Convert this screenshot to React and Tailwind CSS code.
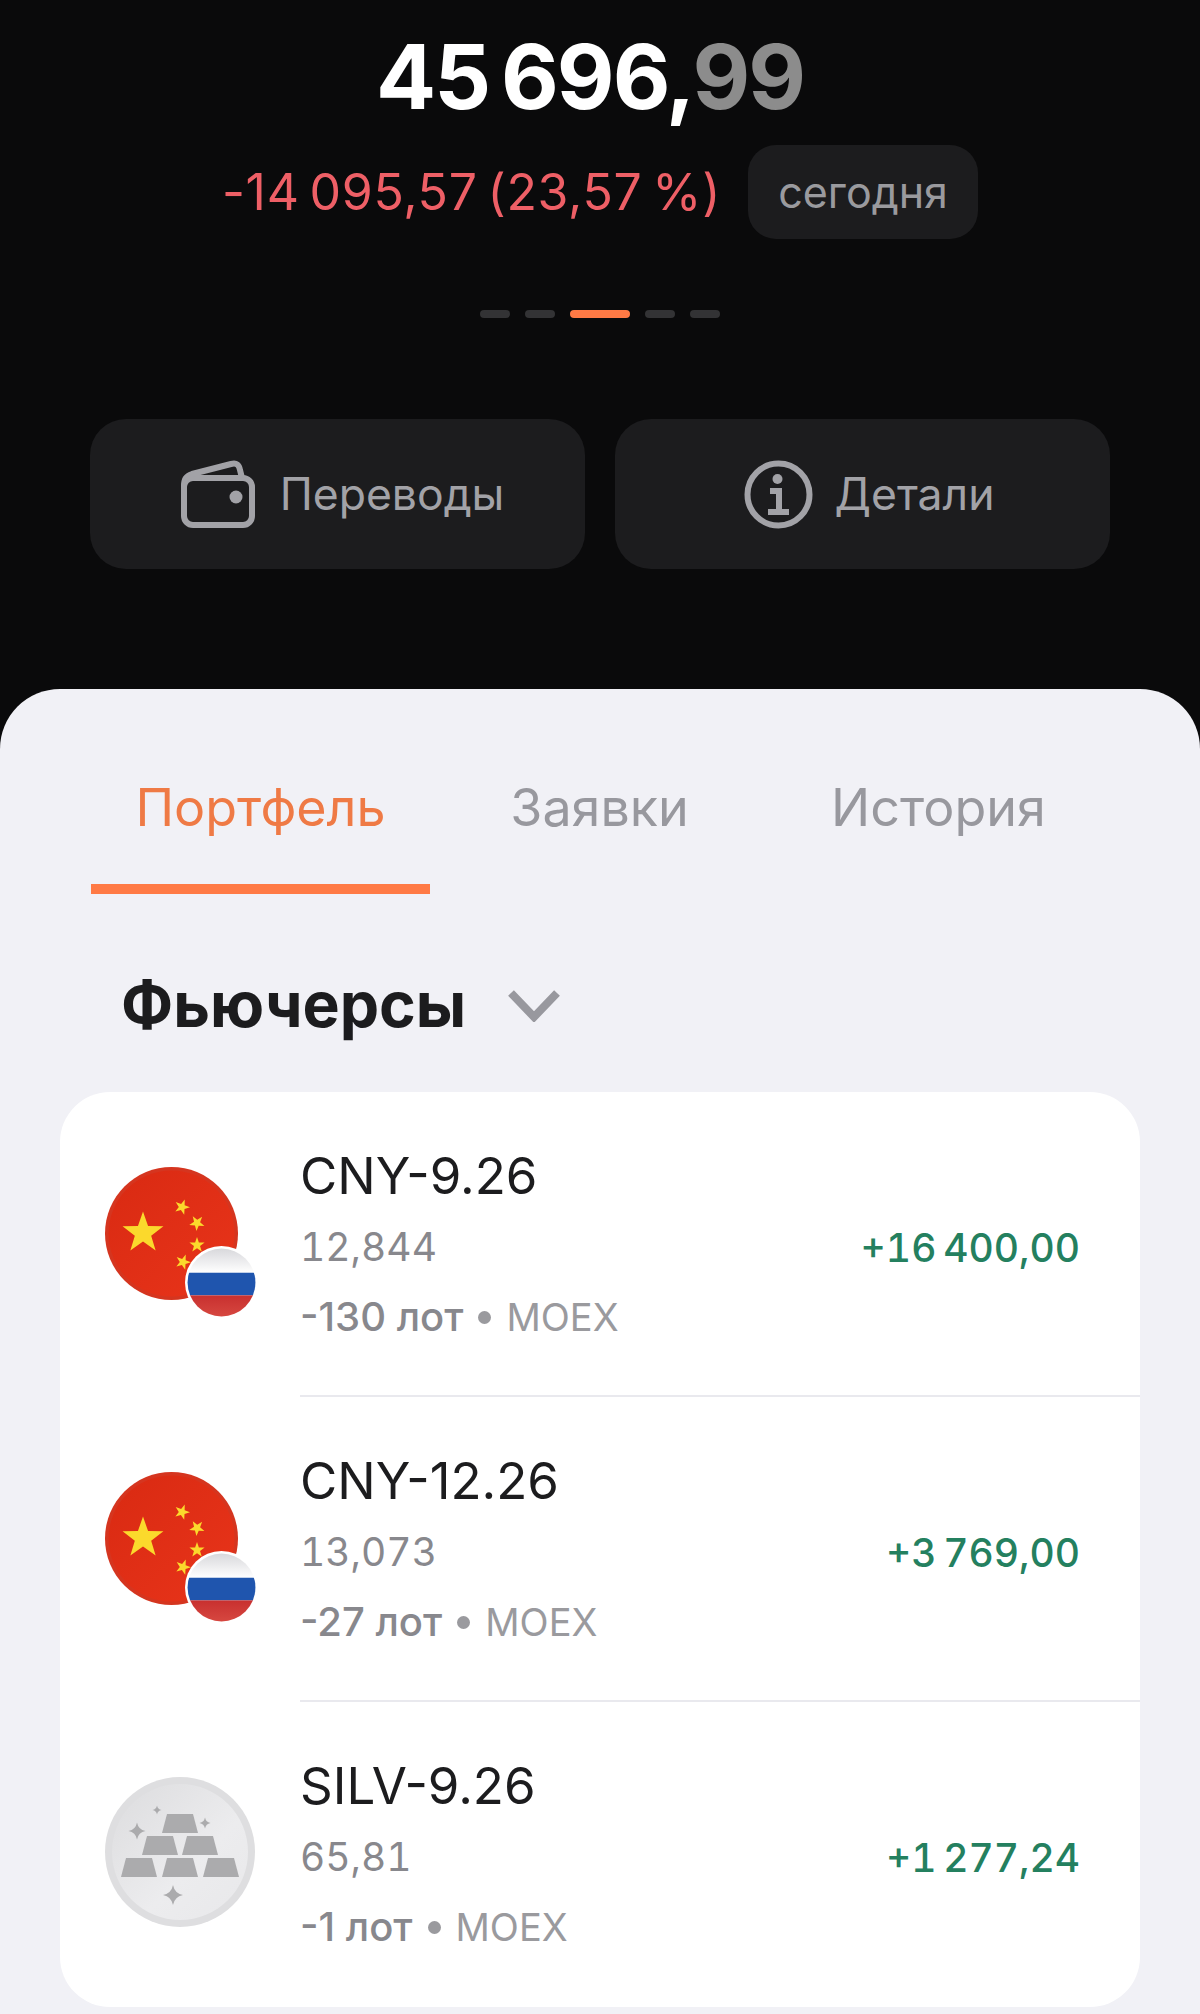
const positions = [
  { id: 1, icon: 'cny', name: 'CNY-9.26', price: '12,844', lots: '-130 лот', pnl: '+16\u2009400,00' },
  { id: 2, icon: 'cny', name: 'CNY-12.26', price: '13,073', lots: '-27 лот', pnl: '+3\u2009769,00' },
  { id: 3, icon: 'silver', name: 'SILV-9.26', price: '65,81', lots: '-1 лот', pnl: '+1\u2009277,24' },
];

const starPoints = '0,-10 2.35,-3.24 9.51,-3.09 3.8,1.24 5.88,8.09 0,4 -5.88,8.09 -3.8,1.24 -9.51,-3.09 -2.35,-3.24';

function ChinaFlag() {
  return (
    <svg viewBox="0 0 133 133" className="w-[133px] h-[133px] block">
      <defs>
        <linearGradient id="cnRed" x1="0" y1="0" x2="1" y2="1">
          <stop offset="0" stopColor="#d92a12" />
          <stop offset="1" stopColor="#e8341a" />
        </linearGradient>
      </defs>
      <circle cx="66.5" cy="66.5" r="66.5" fill="#d5351f" />
      <circle cx="66.5" cy="66.5" r="63" fill="url(#cnRed)" />
      <g fill="#fbd92c">
        <polygon points={starPoints} transform="translate(38 66) scale(2.15)" />
        <polygon points={starPoints} transform="translate(77 40) rotate(20) scale(0.8)" />
        <polygon points={starPoints} transform="translate(92 56) rotate(40) scale(0.8)" />
        <polygon points={starPoints} transform="translate(92 78) rotate(0) scale(0.8)" />
        <polygon points={starPoints} transform="translate(78 95) rotate(20) scale(0.8)" />
      </g>
    </svg>
  );
}

function RussiaFlag() {
  return (
    <svg viewBox="0 0 71 71" className="w-[73px] h-[73px] block">
      <defs>
        <clipPath id="ruClip">
          <circle cx="35.5" cy="35.5" r="33" />
        </clipPath>
        <linearGradient id="ruTop" x1="0" y1="0" x2="0" y2="1">
          <stop offset="0" stopColor="#d4d4d8" />
          <stop offset="1" stopColor="#ffffff" />
        </linearGradient>
        <linearGradient id="ruRed" x1="0" y1="0" x2="0" y2="1">
          <stop offset="0" stopColor="#c8302f" />
          <stop offset="1" stopColor="#d84a42" />
        </linearGradient>
      </defs>
      <circle cx="35.5" cy="35.5" r="35.5" fill="#ffffff" />
      <g clipPath="url(#ruClip)">
        <rect x="0" y="0" width="71" height="26" fill="url(#ruTop)" />
        <rect x="0" y="26" width="71" height="22" fill="#1f55ae" />
        <rect x="0" y="48" width="71" height="23" fill="url(#ruRed)" />
      </g>
    </svg>
  );
}

function SilverCoin() {
  const bars = [
    [57, 37], [37, 59], [77, 59], [16, 81], [57, 81], [98, 81],
  ];
  const sparkle = 'M0 -10 Q1.6 -1.6 10 0 Q1.6 1.6 0 10 Q-1.6 1.6 -10 0 Q-1.6 -1.6 0 -10 Z';
  return (
    <svg viewBox="0 0 150 150" className="w-[150px] h-[150px] block">
      <defs>
        <linearGradient id="coinFace" x1="0" y1="0" x2="1" y2="1">
          <stop offset="0" stopColor="#dcdcde" />
          <stop offset="0.6" stopColor="#ececee" />
          <stop offset="1" stopColor="#e8e8ea" />
        </linearGradient>
      </defs>
      <circle cx="75" cy="75" r="75" fill="#dedee0" />
      <circle cx="75" cy="75" r="68" fill="url(#coinFace)" />
      <g fill="#ababad">
        {bars.map(([x, y]) => (
          <path key={`${x}-${y}`} d={`M${x + 5} ${y}h26l5 19h-36z`} />
        ))}
        <path d={sparkle} transform="translate(52 33) scale(0.45)" />
        <path d={sparkle} transform="translate(32 54) scale(0.85)" />
        <path d={sparkle} transform="translate(100 46) scale(0.55)" />
        <path d={sparkle} transform="translate(68 118) scale(1)" />
      </g>
    </svg>
  );
}

function PositionIcon({ type }) {
  if (type === 'silver') return <SilverCoin />;
  return (
    <div className="relative w-[150px] h-[150px]">
      <ChinaFlag />
      <div className="absolute left-[80px] top-[79px]">
        <RussiaFlag />
      </div>
    </div>
  );
}

function PositionRow({ item, last }) {
  return (
    <div className="flex h-[305px]">
      <div className="w-[240px] shrink-0 pl-[45px] pt-[75px]">
        <PositionIcon type={item.icon} />
      </div>
      <div className={`flex-1 flex pt-[48px] pr-[60px] ${last ? '' : 'border-b-2 border-[#e9e9ee]'}`}>
        <div className="flex-1">
          <div className="text-[51px] leading-[72px] text-[#1c1c1e]">{item.name}</div>
          <div className="text-[39px] leading-[70px] tabular-nums text-[#88888d]">{item.price}</div>
          <div className="flex items-center text-[40px] leading-[70px]">
            <span className="font-medium text-[#88888d]">{item.lots}</span>
            <span className="mx-[15px] w-[13px] h-[13px] rounded-full bg-[#9a9a9e]" />
            <span className="text-[38px] text-[#9a9a9e]">MOEX</span>
          </div>
        </div>
        <div className="pt-[73px] text-[39px] leading-[70px] font-medium tabular-nums text-[#24805f]">{item.pnl}</div>
      </div>
    </div>
  );
}

function WalletIcon() {
  return (
    <svg viewBox="0 0 74 68" className="w-[74px] h-[68px]" fill="none" stroke="#a2a2a7" strokeWidth="6" strokeLinejoin="round">
      <rect x="3" y="18" width="68" height="47" rx="9" />
      <path d="M3 26c0-7 2-10 8-12L50 4c6-1.500 8 1 9 6l2 8" />
      <circle cx="55" cy="37" r="6.500" fill="#a2a2a7" stroke="none" />
    </svg>
  );
}

function InfoIcon() {
  return (
    <svg viewBox="0 0 69 69" className="w-[69px] h-[69px]" fill="none" stroke="#a2a2a7" strokeWidth="6">
      <circle cx="34.500" cy="34.500" r="31" />
      <circle cx="33.500" cy="19" r="5" fill="#a2a2a7" stroke="none" />
      <path d="M26 31h9v20M24 52h21" strokeWidth="6" />
    </svg>
  );
}

export default function App() {
  return (
    <div className="w-full h-[2014px] overflow-hidden bg-[#0a0a0b] font-['Inter',sans-serif]">
      <div className="pt-[27px] flex flex-col items-center">
        <div className="mr-[20px] text-[89px] leading-[100px] font-bold tracking-[-2px] text-white">
          45{'\u2009'}696,<span className="text-[#8c8c8c]">99</span>
        </div>
        <div className="mt-[18px] flex items-center gap-[27px]">
          <span className="text-[50px] leading-[94px] tracking-[0.7px] text-[#ee5f66]">
            -14{'\u2009'}095,57{'\u2009'}(23,57{'\u2009'}%)
          </span>
          <span className="w-[230px] h-[94px] rounded-[28px] bg-[#1c1c1e] flex items-center justify-center text-[43px] text-[#9a9a9e]">
            сегодня
          </span>
        </div>
        <div className="mt-[71px] flex gap-[15px]">
          <span className="w-[30px] h-[8px] rounded-full bg-[#333335]" />
          <span className="w-[30px] h-[8px] rounded-full bg-[#333335]" />
          <span className="w-[60px] h-[8px] rounded-full bg-[#ff7a45]" />
          <span className="w-[30px] h-[8px] rounded-full bg-[#333335]" />
          <span className="w-[30px] h-[8px] rounded-full bg-[#333335]" />
        </div>
      </div>

      <div className="mt-[101px] px-[90px] flex gap-[30px]">
        <button className="w-[495px] h-[150px] pl-[10px] rounded-[36px] bg-[#1c1c1e] flex items-center justify-center gap-[25px] text-[44.5px] text-[#a2a2a7]">
          <WalletIcon />
          Переводы
        </button>
        <button className="w-[495px] h-[150px] pl-[14px] rounded-[36px] bg-[#1c1c1e] flex items-center justify-center gap-[21px] text-[44.5px] text-[#a2a2a7]">
          <InfoIcon />
          Детали
        </button>
      </div>

      <div className="mt-[120px] h-[1325px] rounded-t-[60px] bg-[#f1f1f6]">
        <div className="pt-[85px] px-[91px] flex">
          {['Портфель', 'Заявки', 'История'].map((tab, i) => (
            <div key={tab} className="w-[339px] flex flex-col items-center">
              <span className={`text-[52px] leading-[68px] ${i === 0 ? 'text-[#ef7a45]' : 'text-[#98989e]'}`}>{tab}</span>
              <span className={`mt-[42px] w-full h-[10px] ${i === 0 ? 'bg-[#ff7a45]' : ''}`} />
            </div>
          ))}
        </div>
        <div className="mt-[69px] pl-[121px] flex items-center gap-[42px]">
          <span className="text-[62.5px] leading-[82px] font-bold text-[#1c1c1e]">Фьючерсы</span>
          <svg viewBox="0 0 52 32" className="w-[52px] h-[32px] mt-[4px]" fill="none" stroke="#98989e" strokeWidth="8">
            <path d="M3 3l23 24L49 3" />
          </svg>
        </div>
        <div className="mt-[47px] mx-[60px] rounded-[50px] bg-white overflow-hidden">
          {positions.map((item, i) => (
            <PositionRow key={item.id} item={item} last={i === positions.length - 1} />
          ))}
        </div>
      </div>
    </div>
  );
}
